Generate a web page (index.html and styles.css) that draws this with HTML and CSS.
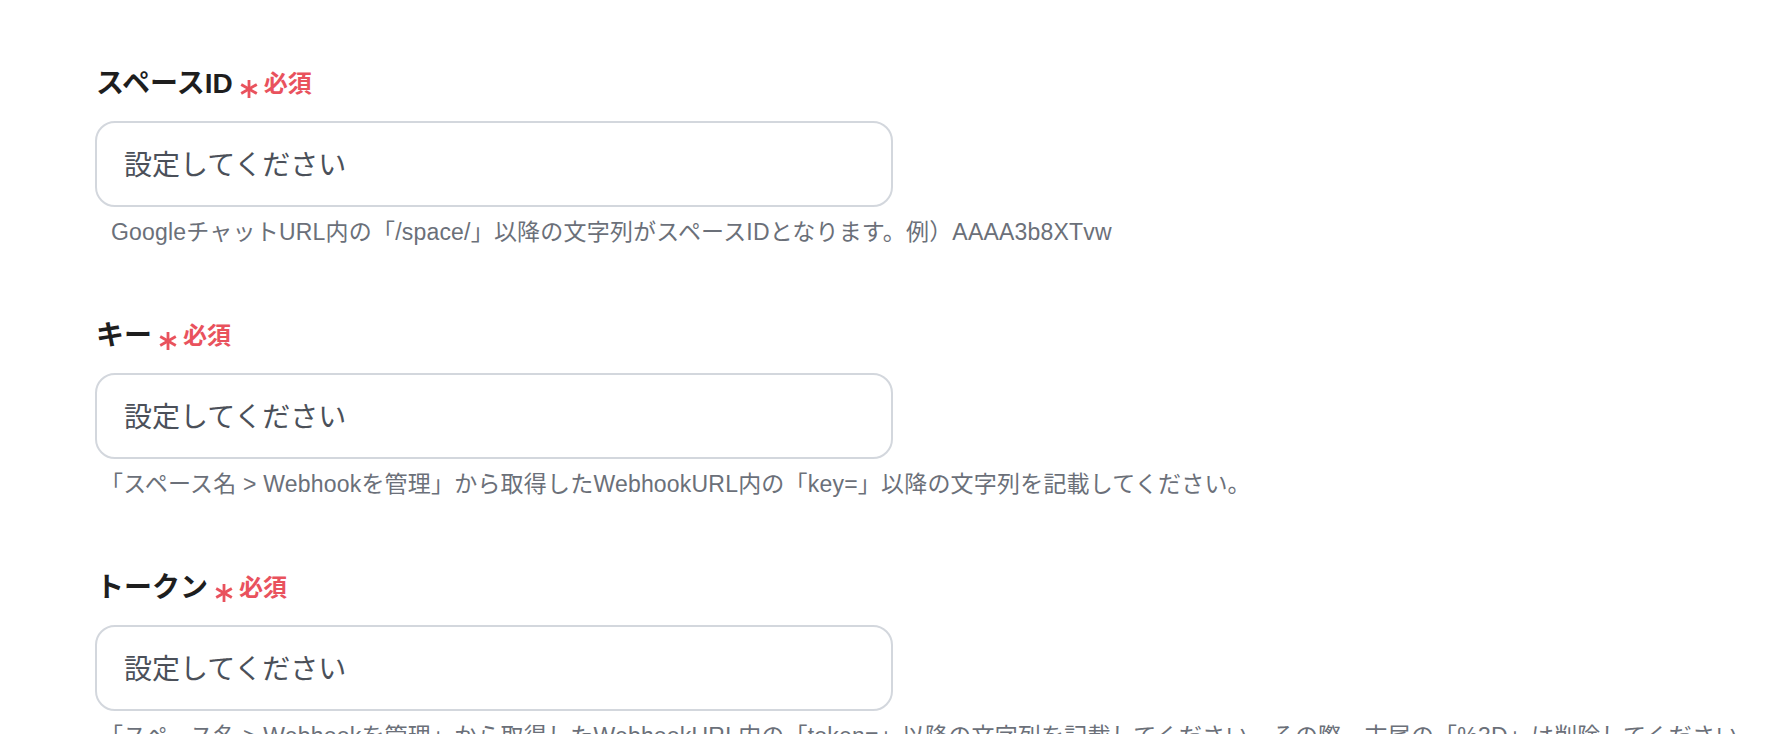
FILE: index.html
```html
<!DOCTYPE html>
<html lang="ja">
<head>
<meta charset="utf-8">
<title>Google Chat 設定</title>
<link rel="stylesheet" href="styles.css">
</head>
<body>
<main class="form">
  <div class="field">
    <div class="label-row">
      <span class="label">スペースID</span>
      <span class="req"><svg class="ast" viewBox="0 0 18 20" aria-hidden="true"><g stroke="currentColor" stroke-width="2.8"><line x1="9" y1="1" x2="9" y2="19"/><line x1="1.2" y1="5.5" x2="16.8" y2="14.5"/><line x1="1.2" y1="14.5" x2="16.8" y2="5.5"/></g></svg>必須</span>
    </div>
    <input class="input" type="text" placeholder="設定してください">
    <p class="help">GoogleチャットURL内の「/space/」以降の文字列がスペースIDとなります。例）AAAA3b8XTvw</p>
  </div>
  <div class="field">
    <div class="label-row">
      <span class="label">キー</span>
      <span class="req"><svg class="ast" viewBox="0 0 18 20" aria-hidden="true"><g stroke="currentColor" stroke-width="2.8"><line x1="9" y1="1" x2="9" y2="19"/><line x1="1.2" y1="5.5" x2="16.8" y2="14.5"/><line x1="1.2" y1="14.5" x2="16.8" y2="5.5"/></g></svg>必須</span>
    </div>
    <input class="input" type="text" placeholder="設定してください">
    <p class="help help-bracket">「スペース名 &gt; Webhookを管理」から取得したWebhookURL内の「key=」以降の文字列を記載してください。</p>
  </div>
  <div class="field">
    <div class="label-row">
      <span class="label">トークン</span>
      <span class="req"><svg class="ast" viewBox="0 0 18 20" aria-hidden="true"><g stroke="currentColor" stroke-width="2.8"><line x1="9" y1="1" x2="9" y2="19"/><line x1="1.2" y1="5.5" x2="16.8" y2="14.5"/><line x1="1.2" y1="14.5" x2="16.8" y2="5.5"/></g></svg>必須</span>
    </div>
    <input class="input" type="text" placeholder="設定してください">
    <p class="help help-bracket">「スペース名 &gt; Webhookを管理」から取得したWebhookURL内の「token=」以降の文字列を記載してください。その際、末尾の「%3D」は削除してください。</p>
  </div>
</main>
</body>
</html>
```

FILE: styles.css
```css
html, body {
  margin: 0;
  background: #ffffff;
}

body {
  font-family: "Liberation Sans", "Noto Sans CJK JP", sans-serif;
  overflow: hidden;
}

.form {
  display: flex;
  flex-direction: column;
  gap: 70px;
  padding: 66px 0 0 95px;
}

.field {
  display: flex;
  flex-direction: column;
}

.label-row {
  display: flex;
  align-items: center;
  height: 36px;
}

.label {
  font-size: 28px;
  font-weight: 700;
  line-height: 36px;
  color: #1e1e1e;
  margin-left: 1px;
}

.req {
  display: flex;
  align-items: center;
  gap: 6px;
  margin-left: 7px;
  font-size: 24px;
  font-weight: 700;
  line-height: 36px;
  color: #e9525d;
}

.ast {
  width: 18px;
  height: 20px;
  margin-top: 10px;
}

.input {
  box-sizing: border-box;
  width: 798px;
  height: 86px;
  margin: 19px 0 0;
  padding: 3px 27px 0;
  border: 2px solid #d3d7dd;
  border-radius: 20px;
  background: #ffffff;
  font-family: "Liberation Sans", "Noto Sans CJK JP", sans-serif;
  font-size: 28px;
  color: #333333;
  outline: none;
}

.input::placeholder {
  color: #4b5059;
  opacity: 1;
}

.help {
  margin: 9px 0 0 16px;
  font-size: 23px;
  line-height: 32px;
  color: #6b7079;
  white-space: nowrap;
  letter-spacing: 0.2px;
}

.help-bracket {
  text-indent: -11px;
}
```
